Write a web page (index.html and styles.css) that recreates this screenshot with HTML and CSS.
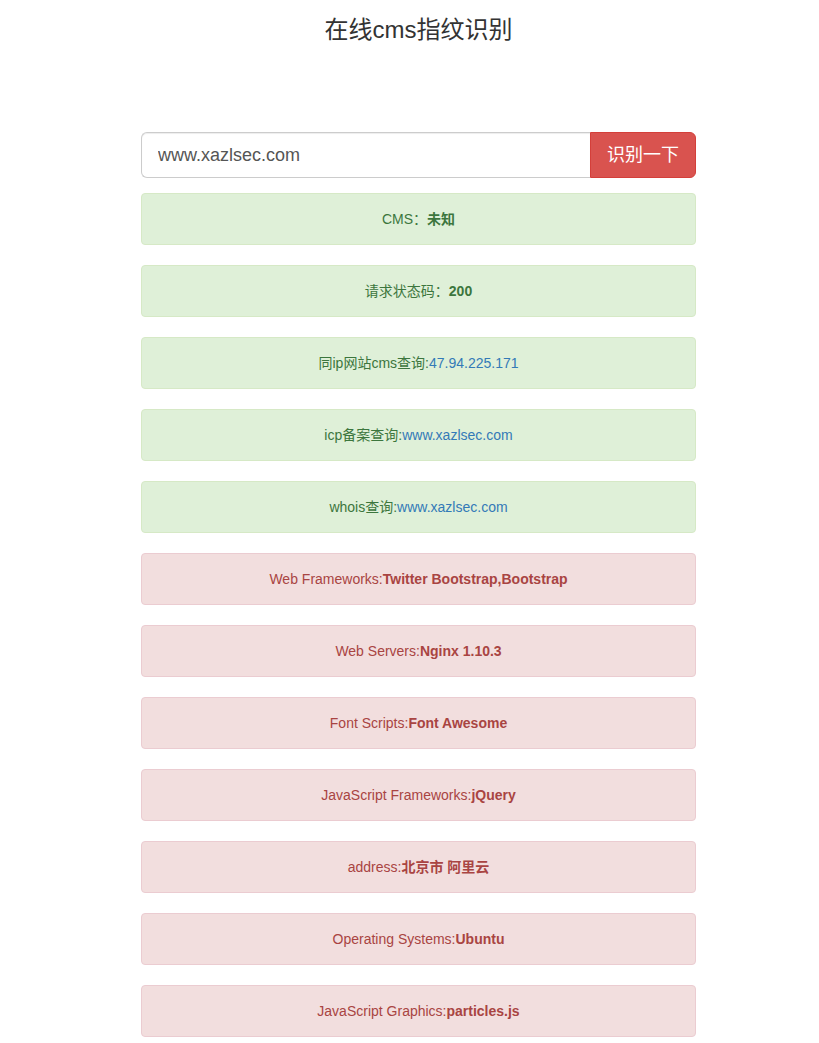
FILE: index.html
```html
<!DOCTYPE html>
<html lang="zh-CN">
<head>
<meta charset="utf-8">
<title>在线cms指纹识别</title>
<link rel="stylesheet" href="styles.css">
</head>
<body>
<div class="container">
  <h3 class="title">在线cms指纹识别</h3>
  <form class="input-group">
    <input class="form-control" type="text" value="www.xazlsec.com">
    <button class="btn-danger" type="button">识别一下</button>
  </form>
  <div class="results">
    <div class="alert alert-success">CMS：<b>未知</b></div>
    <div class="alert alert-success">请求状态码：<b>200</b></div>
    <div class="alert alert-success">同ip网站cms查询:<a href="#">47.94.225.171</a></div>
    <div class="alert alert-success">icp备案查询:<a href="#">www.xazlsec.com</a></div>
    <div class="alert alert-success">whois查询:<a href="#">www.xazlsec.com</a></div>
    <div class="alert alert-danger">Web Frameworks:<b>Twitter Bootstrap,Bootstrap</b></div>
    <div class="alert alert-danger">Web Servers:<b>Nginx 1.10.3</b></div>
    <div class="alert alert-danger">Font Scripts:<b>Font Awesome</b></div>
    <div class="alert alert-danger">JavaScript Frameworks:<b>jQuery</b></div>
    <div class="alert alert-danger">address:<b>北京市 阿里云</b></div>
    <div class="alert alert-danger">Operating Systems:<b>Ubuntu</b></div>
    <div class="alert alert-danger">JavaScript Graphics:<b>particles.js</b></div>
  </div>
</div>
</body>
</html>
```

FILE: styles.css
```css
* { box-sizing: border-box; }
html, body { margin: 0; padding: 0; background: #fff; }
body {
  font-family: "Liberation Sans", Arial, "Noto Sans CJK SC", sans-serif;
  font-size: 14px;
  line-height: 20px;
  color: #333;
}
.container {
  width: 555px;
  margin: 0 0 0 141px;
}
.title {
  margin: 17px 0 0;
  font-size: 24px;
  line-height: 26px;
  font-weight: 400;
  text-align: center;
  color: #333;
}
.input-group {
  display: flex;
  margin: 89px 0 0;
  height: 46px;
}
.form-control {
  flex: 1;
  min-width: 0;
  height: 46px;
  padding: 10px 16px;
  font-family: inherit;
  font-size: 18px;
  line-height: 24px;
  color: #555;
  background: #fff;
  border: 1px solid #ccc;
  border-right: 0;
  border-radius: 6px 0 0 6px;
  box-shadow: inset 0 1px 1px rgba(0,0,0,.075);
  outline: none;
}
.btn-danger {
  height: 46px;
  padding: 10px 16px;
  font-family: inherit;
  font-size: 18px;
  line-height: 24px;
  color: #fff;
  background: #d9534f;
  border: 1px solid #d43f3a;
  border-radius: 0 6px 6px 0;
  cursor: pointer;
}
.results {
  display: flex;
  flex-direction: column;
  gap: 20px;
  margin-top: 15px;
}
.alert {
  padding: 15px;
  border: 1px solid transparent;
  border-radius: 4px;
  text-align: center;
  line-height: 20px;
}
.alert b { font-weight: bold; color: inherit; }
.alert-success {
  color: #3c763d;
  background: #dff0d8;
  border-color: #d6e9c6;
}
.alert-danger {
  color: #a94442;
  background: #f2dede;
  border-color: #ebccd1;
}
.alert a { color: #337ab7; text-decoration: none; }
```
